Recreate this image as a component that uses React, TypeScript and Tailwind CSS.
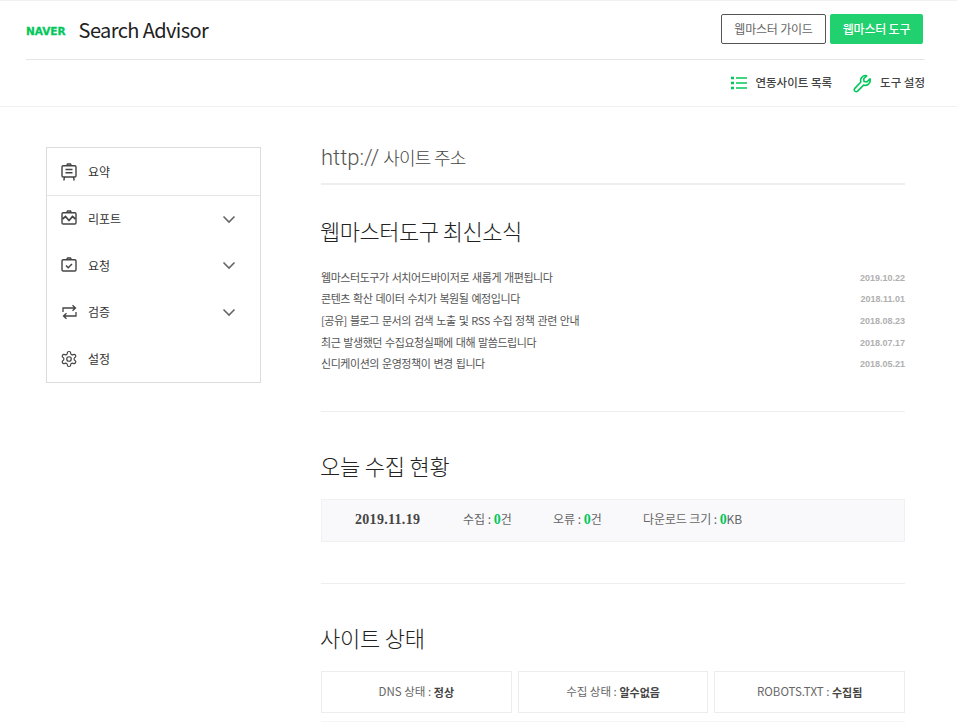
import React from "react";

const kr = { fontFamily: '"Noto Sans CJK KR", "Roboto", sans-serif' };

function Board({ children }: { children?: React.ReactNode }) {
  return (
    <svg width="16" height="18" viewBox="0 0 16 18" fill="none" stroke="#444" strokeWidth="1.4" className="shrink-0">
      <rect x="1" y="2.8" width="14" height="11.2" rx="1.2" />
      <path d="M5.6 2.8 6.5 1h3l.9 1.8" />
      {children}
    </svg>
  );
}

function Chevron() {
  return (
    <svg width="14" height="9" viewBox="0 0 14 9" fill="none" stroke="#666" strokeWidth="1.6" className="ml-auto mr-[24px]">
      <path d="M1.5 1.5 7 7l5.5-5.5" />
    </svg>
  );
}

function MenuItem({ icon, label, chevron, h }: { icon: React.ReactNode; label: string; chevron?: boolean; h: string }) {
  return (
    <div className={`flex items-center pl-[14px] ${h}`}>
      <span className="flex w-[16px] justify-center shrink-0">{icon}</span>
      <span className="ml-[11px] text-[12px] text-[#333]" style={kr}>{label}</span>
      {chevron && <Chevron />}
    </div>
  );
}

function News({ t, d }: { t: string; d: string }) {
  return (
    <li className="flex h-[21.7px] items-center justify-between">
      <span className="text-[11px] text-[#555] tracking-[-0.45px] [word-spacing:1px]" style={kr}>{t}</span>
      <span className="mt-[3px] text-[9px] font-bold text-[#b0b0b0]" style={{ fontFamily: '"Liberation Sans", sans-serif' }}>{d}</span>
    </li>
  );
}

function StatusCard({ label, value }: { label: string; value: string }) {
  return (
    <div className="flex h-[42px] flex-1 items-center justify-center border border-[#ededed] text-[11.5px] text-[#666]" style={kr}>
      {label} :&nbsp;<b className="text-[11px] text-[#444] font-bold">{value}</b>
    </div>
  );
}

function Zero() {
  return <b className="text-[14px] font-bold text-[#03c75a]" style={{ fontFamily: '"Liberation Serif", serif' }}>0</b>;
}

export default function App() {
  return (
    <div className="h-[722px] w-[957px] overflow-hidden bg-white" style={kr}>
      <header className="h-[107px] border-t border-b border-[#f0f0f0]">
        <div className="mx-[26px] w-[899px] flex h-[59px] items-center border-b border-[#e5e5e5]">
          <span className="mt-[3px] text-[10.5px] font-bold text-[#03c75a]" style={{ fontFamily: '"DejaVu Sans", sans-serif', WebkitTextStroke: "0.3px #03c75a" }}>NAVER</span>
          <span className="ml-[13px] text-[20px] tracking-[-0.6px] text-[#222]" style={kr}>Search Advisor</span>
          <div className="ml-auto mr-[2px] flex gap-[4px] pb-[3px]">
            <button className="h-[30px] w-[105px] rounded-[2px] border border-[#555] text-[12px] tracking-[-0.2px] text-[#666]">웹마스터 가이드</button>
            <button className="h-[30px] w-[93px] rounded-[2px] bg-[#21d06f] text-[12px] font-medium tracking-[-0.2px] text-white">웹마스터 도구</button>
          </div>
        </div>
        <div className="mx-[26px] w-[899px] flex h-[46px] items-center justify-end">
          <svg width="16" height="14" viewBox="0 0 16 14" fill="none" stroke="#03c75a" className="mr-[8px]">
            <path d="M5 2h11M5 7h11M5 12h11" strokeWidth="1.7" />
            <path d="M0 2h3M0 7h3M0 12h3" strokeWidth="2.6" />
          </svg>
          <span className="text-[11.5px] font-medium text-[#444]">연동사이트 목록</span>
          <svg width="19" height="19" viewBox="0 0 24 24" fill="none" stroke="#03c75a" strokeWidth="2" strokeLinejoin="round" className="ml-[21px] mr-[8px]">
            <path d="M15.5 2a6.3 6.3 0 0 0-5.6 8.2L2 18.5a2.4 2.4 0 0 0 0 2.6l.9.9a2.4 2.4 0 0 0 2.6 0l7.9-8a6.3 6.3 0 0 0 8.4-5.6c0-.8-.1-1.5-.4-2.2L17.5 10 14 9.5 13.5 6l3.8-3.6c-.6-.2-1.1-.4-1.8-.4z" />
          </svg>
          <span className="text-[11.5px] font-medium text-[#444]">도구 설정</span>
        </div>
      </header>

      <div className="flex">
        <nav className="ml-[46px] mt-[40px] h-[236px] w-[215px] shrink-0 border border-[#dcdcdc] self-start">
          <div className="border-b border-[#e6e6e6]">
            <MenuItem h="h-[47px]" label="요약" icon={<Board><path d="M4.5 6.5h7M4.5 9.8h7" /><path d="M3.5 14 2.8 17.5M12.5 14l.7 3.5" /></Board>} />
          </div>
          <MenuItem h="h-[46.5px]" chevron label="리포트" icon={<Board><path d="M1.5 9 4.5 6.5 8 10.5l3.5-4 3 2.5" strokeWidth="1.7" /></Board>} />
          <MenuItem h="h-[46.5px]" chevron label="요청" icon={<Board><path d="m5 8.5 2.2 2.2L11 7" strokeWidth="1.5" /></Board>} />
          <MenuItem
            h="h-[46.5px]"
            chevron
            label="검증"
            icon={
              <svg width="15" height="16" viewBox="0 0 15 16" fill="none" stroke="#444" strokeWidth="1.3">
                <path d="M1 8V4h12M10.5 1.2 13.5 4l-3 2.8M14 8v4H2M4.5 9.2 1.5 12l3 2.8" />
              </svg>
            }
          />
          <MenuItem
            h="h-[46px]"
            label="설정"
            icon={
              <svg width="18" height="18" viewBox="0 0 24 24" fill="none" stroke="#444" strokeWidth="1.6" strokeLinejoin="round" className="shrink-0">
                <path d="M12.22 2h-.44a2 2 0 0 0-2 2v.18a2 2 0 0 1-1 1.73l-.43.25a2 2 0 0 1-2 0l-.15-.08a2 2 0 0 0-2.73.73l-.22.38a2 2 0 0 0 .73 2.73l.15.1a2 2 0 0 1 1 1.72v.51a2 2 0 0 1-1 1.74l-.15.09a2 2 0 0 0-.73 2.73l.22.38a2 2 0 0 0 2.73.73l.15-.08a2 2 0 0 1 2 0l.43.25a2 2 0 0 1 1 1.73V20a2 2 0 0 0 2 2h.44a2 2 0 0 0 2-2v-.18a2 2 0 0 1 1-1.73l.43-.25a2 2 0 0 1 2 0l.15.08a2 2 0 0 0 2.73-.73l.22-.39a2 2 0 0 0-.73-2.73l-.15-.08a2 2 0 0 1-1-1.74v-.5a2 2 0 0 1 1-1.74l.15-.09a2 2 0 0 0 .73-2.73l-.22-.38a2 2 0 0 0-2.73-.73l-.15.08a2 2 0 0 1-2 0l-.43-.25a2 2 0 0 1-1-1.73V4a2 2 0 0 0-2-2z" />
                <circle cx="12" cy="12" r="3" />
              </svg>
            }
          />
        </nav>

        <main className="ml-[60px] w-[584px]">
          <div className="flex h-[78px] items-center border-b-2 border-[#eeeeee] pt-[24px]">
            <h1 className="font-light text-[#555]" style={{ fontFamily: 'Roboto, "Noto Sans CJK KR", sans-serif' }}>
              <span className="text-[22px]">http://</span>
              <span className="ml-[4px] text-[18px] tracking-[-0.8px] text-[#444]">사이트 주소</span>
            </h1>
          </div>

          <section className="h-[227px] border-b border-[#eeeeee]">
            <h2 className="-ml-[1px] pt-[29px] text-[22px] leading-[32px] tracking-[-0.5px] font-light text-[#222]">웹마스터도구 최신소식</h2>
            <ul className="mt-[20px]">
              <News t="웹마스터도구가 서치어드바이저로 새롭게 개편됩니다" d="2019.10.22" />
              <News t="콘텐츠 확산 데이터 수치가 복원될 예정입니다" d="2018.11.01" />
              <News t="[공유] 블로그 문서의 검색 노출 및 RSS 수집 정책 관련 안내" d="2018.08.23" />
              <News t="최근 발생했던 수집요청실패에 대해 말씀드립니다" d="2018.07.17" />
              <News t="신디케이션의 운영정책이 변경 됩니다" d="2018.05.21" />
            </ul>
          </section>

          <section className="h-[172px] border-b border-[#eeeeee]">
            <h2 className="-ml-[1px] pt-[37px] text-[22px] leading-[32px] tracking-[-0.2px] font-light text-[#222]">오늘 수집 현황</h2>
            <div className="mt-[18px] flex h-[43px] items-center border border-[#f1f1f1] bg-[#f9f9fb] pb-[2px] text-[12px] text-[#666]">
              <b className="ml-[33px] w-[108px] text-[14px] tracking-[0.3px] text-[#444]" style={{ fontFamily: '"Liberation Serif", serif' }}>2019.11.19</b>
              <span className="w-[90px]">수집 : <Zero />건</span>
              <span className="w-[90px]">오류 : <Zero />건</span>
              <span className="tracking-[-0.1px]">다운로드 크기 : <Zero />KB</span>
            </div>
          </section>

          <section className="h-[138px] border-b border-[#f6f6f6]">
            <h2 className="-ml-[1px] pt-[37px] text-[22px] leading-[32px] tracking-[-0.2px] font-light text-[#222]">사이트 상태</h2>
            <div className="mt-[18px] flex gap-[6px]">
              <StatusCard label="DNS 상태" value="정상" />
              <StatusCard label="수집 상태" value="알수없음" />
              <StatusCard label="ROBOTS.TXT" value="수집됨" />
            </div>
          </section>
        </main>
      </div>
    </div>
  );
}
